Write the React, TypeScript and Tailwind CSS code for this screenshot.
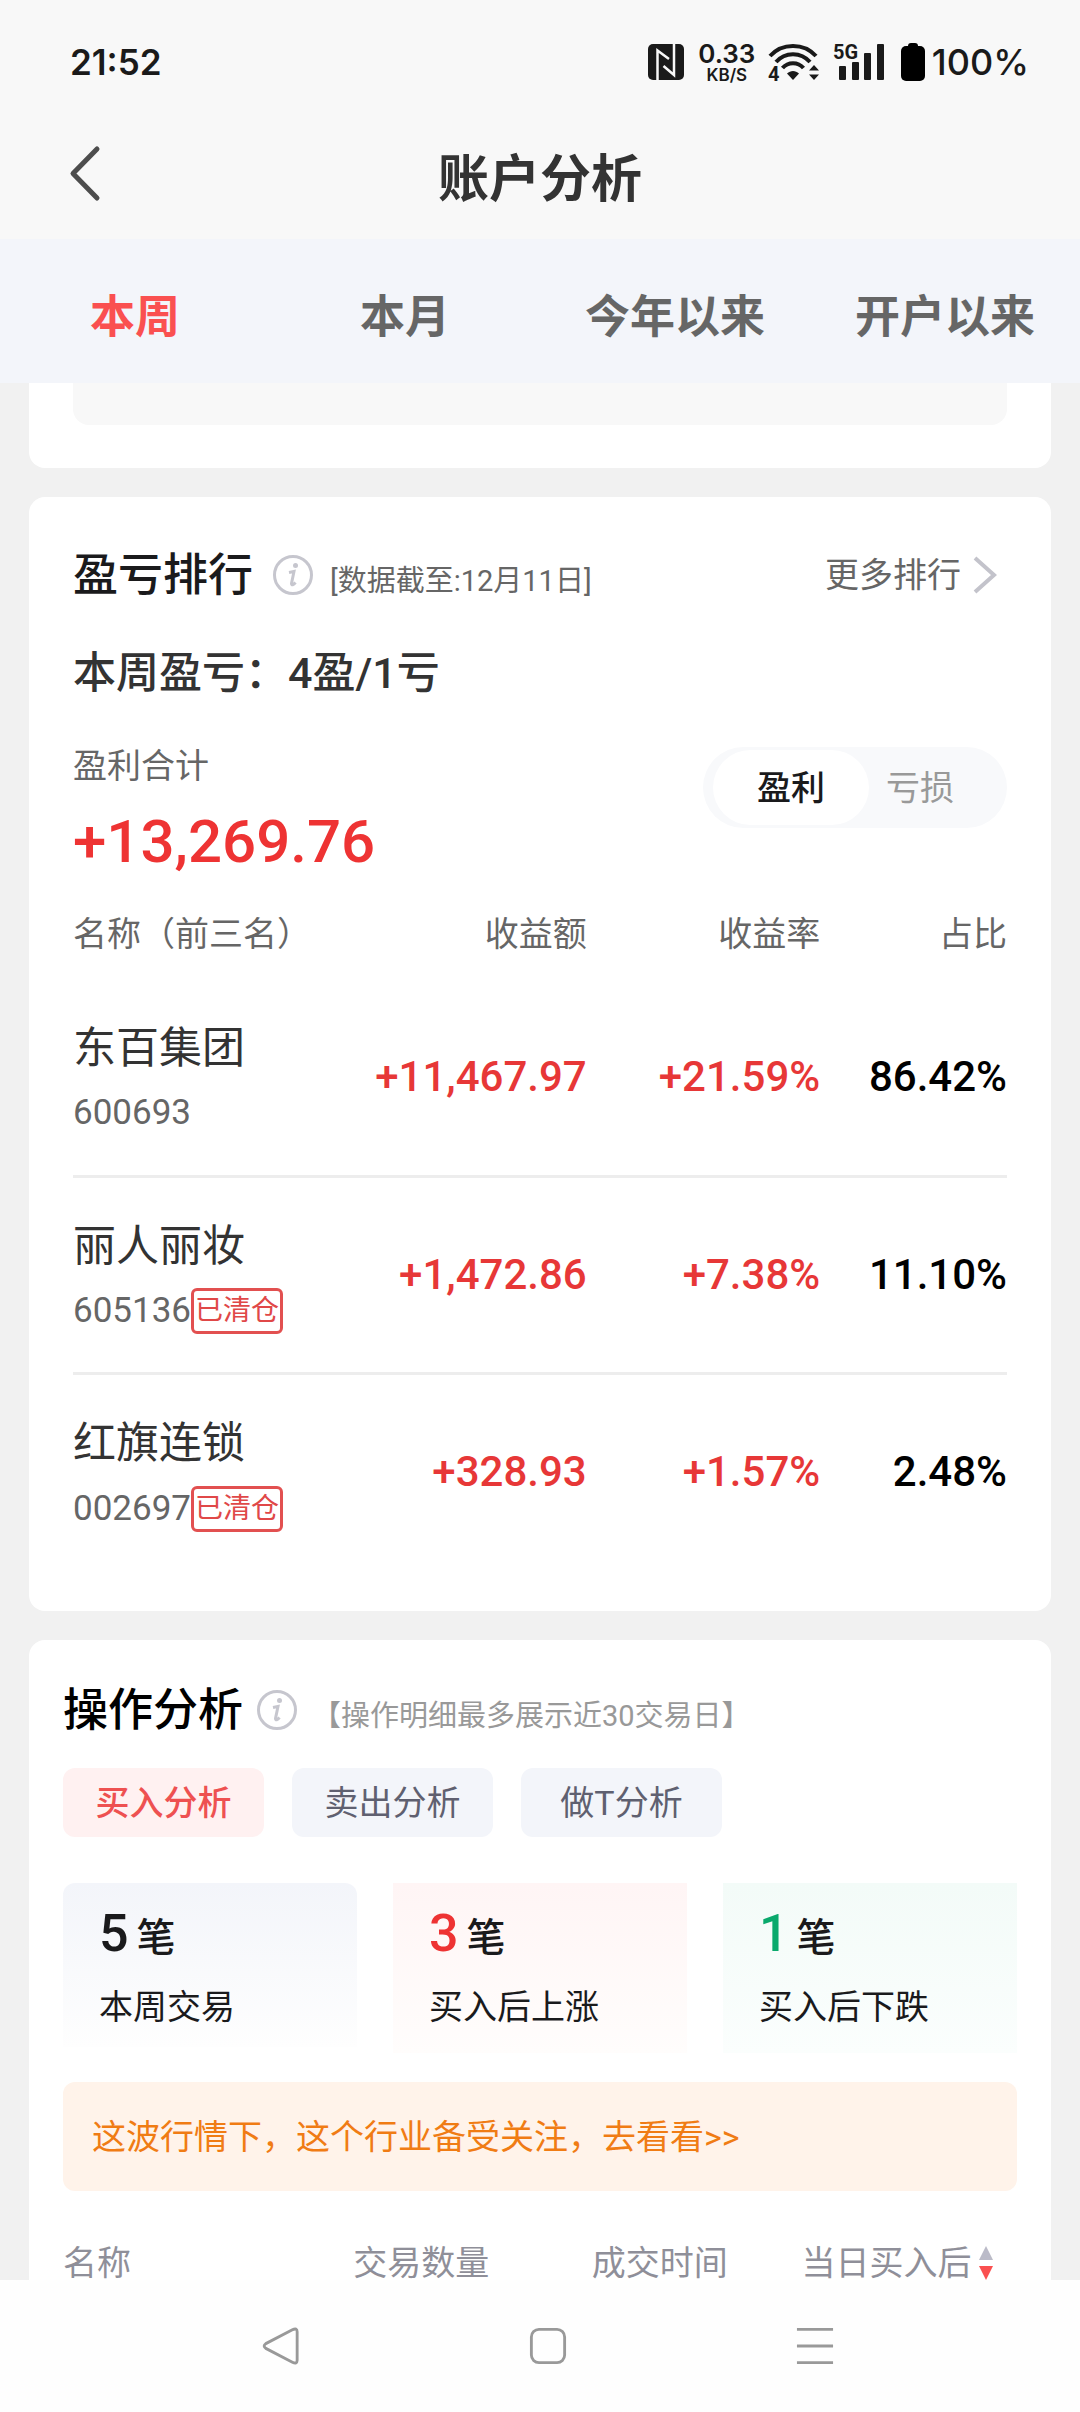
import { useState } from 'react'

const tabs = ['本周', '本月', '今年以来', '开户以来']

const stocks = [
    { name: '东百集团', code: '600693', cleared: false, profit: '+11,467.97', rate: '+21.59%', share: '86.42%' },
    { name: '丽人丽妆', code: '605136', cleared: true, profit: '+1,472.86', rate: '+7.38%', share: '11.10%' },
    { name: '红旗连锁', code: '002697', cleared: true, profit: '+328.93', rate: '+1.57%', share: '2.48%' },
]

const analyses = ['买入分析', '卖出分析', '做T分析']

const stats = [
    { count: 5, label: '本周交易', color: 'text-[#1a1a1c]', bg: 'h-[164px] rounded-t-xl from-[#f3f5fa] to-[#fefefe]' },
    { count: 3, label: '买入后上涨', color: 'text-[#ee3333]', bg: 'h-[170px] from-[#fff5f5] to-[#fffdfc]' },
    { count: 1, label: '买入后下跌', color: 'text-[#0aa96c]', bg: 'h-[170px] from-[#f3fbf8] to-[#fbfefd]' },
]

const StatusBar = () => (
    <div className="h-[112px] pt-[12px] pl-[70px] pr-[51px] flex items-center justify-between font-['Inter','Noto_Sans_CJK_SC',sans-serif] text-[#1a1a1a]">
        <span className="text-[35px] font-semibold">21:52</span>
        <div className="flex items-center">
            {/* nfc */}
            <svg width="36" height="36" viewBox="0 0 36 36" fill="none">
                <rect width="36" height="36" rx="5" fill="#1a1a1a" />
                <path d="M9.500 36V6.500L21 15M26 0V31L15.500 22" stroke="#f8f8f8" strokeWidth="2.500" />
            </svg>
            <div className="w-[58px] ml-[14px] flex flex-col items-center font-semibold">
                <span className="text-[26px] leading-[26px]">0.33</span>
                <span className="text-[17px] leading-[17px]">KB/S</span>
            </div>
            {/* wifi */}
            <svg className="ml-[11px] overflow-visible" width="54" height="40" viewBox="0 0 54 40" fill="none">
                <path d="M3 14C15 .5 37 .5 49 14M9 20C18 9.500 34 9.500 43 20M15.500 26C21 19.500 31 19.500 36.500 26" stroke="#1a1a1a" strokeWidth="4" />
                <path d="M26 38L20 31.500C23.500 28 28.500 28 32 31.500Z" fill="#1a1a1a" />
                <path d="M47 23l5 5.500H42zM47 38l5-5.500H42z" fill="#1a1a1a" />
                <text x="1" y="39" fontSize="20" fontWeight="700" fill="#1a1a1a" fontFamily="Roboto">4</text>
            </svg>
            {/* signal */}
            <svg className="ml-[12px] overflow-visible" width="54" height="40" viewBox="0 0 54 40">
                <text x="0" y="17" fontSize="20" fontWeight="700" fill="#1a1a1a" fontFamily="Roboto">5G</text>
                <g fill="#1a1a1a">
                    <rect x="6" y="24" width="7" height="14" rx="1" />
                    <rect x="19" y="20" width="7" height="18" rx="1" />
                    <rect x="31" y="11" width="7" height="27" rx="1" />
                    <rect x="44" y="2" width="7" height="36" rx="1" />
                </g>
            </svg>
            {/* battery */}
            <svg className="ml-[14px]" width="24" height="38" viewBox="0 0 24 38">
                <rect x="7" width="10" height="8" rx="3" />
                <rect y="3" width="24" height="35" rx="5" />
            </svg>
            <span className="ml-[7px] text-[36px] font-medium">100%</span>
        </div>
    </div>
)

const InfoIcon = () => (
    <svg width="42" height="42" viewBox="0 0 42 42" fill="none" stroke="#c6c6ce">
        <circle cx="21" cy="21" r="18.500" strokeWidth="3" />
        <path d="M17 18.500L22 17.500L19.500 29.500C19.500 31.500 21.500 31 23.500 28.500" strokeWidth="3" />
        <circle cx="23.500" cy="11.500" r="2.500" fill="#c6c6ce" stroke="none" />
    </svg>
)

const App = () => {
    const [activeTab, setActiveTab] = useState('本周')
    const [side, setSide] = useState('盈利')
    const [analysis, setAnalysis] = useState('买入分析')

    return (
        <div className="h-screen min-h-[2412px] flex flex-col bg-[#f1f1f1] font-['Roboto','Noto_Sans_CJK_SC',sans-serif] text-[34px] leading-[48px] text-[#666]">
            <header className="shrink-0 bg-[#f8f8f8]">
                <StatusBar />
                <div className="h-[127px] px-[64px] grid grid-cols-[1fr_auto_1fr] items-center">
                    <button aria-label="返回" className="pb-1">
                        <svg width="42" height="60" viewBox="0 0 42 60" fill="none" stroke="#4d4d4d" strokeWidth="5" strokeLinecap="round" strokeLinejoin="round">
                            <path d="M33 5L9 29.500L33 54" />
                        </svg>
                    </button>
                    <h1 className="pt-2 text-[51px] font-bold text-[#333]">账户分析</h1>
                </div>
            </header>

            <nav className="h-[144px] pt-[14px] shrink-0 grid grid-cols-4 bg-[#f3f5fa]">
                {tabs.map((tab) => (
                    <button key={tab} onClick={() => setActiveTab(tab)} className={`text-[45px] font-bold ${activeTab === tab ? 'text-[#fa5050]' : 'text-[#666]'}`}>{tab}</button>
                ))}
            </nav>

            <main className="flex-1 min-h-0 overflow-hidden px-[29px]">
                {/* tail of the previous card */}
                <div className="h-[85px] px-[44px] pb-[43px] bg-white rounded-b-2xl">
                    <div className="h-full bg-[#f8f8f8] rounded-b-2xl" />
                </div>

                {/* ranking */}
                <section className="mt-[29px] px-[44px] pt-[48px] pb-[41px] bg-white rounded-2xl">
                    <div className="h-[60px] flex items-center">
                        <h2 className="pt-[2px] text-[45px] font-medium text-[#1a1a1c]">盈亏排行</h2>
                        <button aria-label="说明" className="ml-[19px]"><InfoIcon /></button>
                        <span className="ml-[16px] pt-[11px] text-[29px]">[数据截至:12月11日]</span>
                        <a href="#" className="ml-auto pr-[10px] flex items-center gap-3">
                            更多排行
                            <svg width="24" height="38" viewBox="0 0 24 38" fill="none" stroke="#c3c3cb" strokeWidth="4">
                                <path d="M2 2L21 19L2 36" />
                            </svg>
                        </a>
                    </div>
                    <p className="mt-[38px] text-[43px] leading-[60px] font-medium text-[#333]">本周盈亏：4盈/1亏</p>
                    <div className="mt-[39px] flex justify-between">
                        <div>
                            <p>盈利合计</p>
                            <p className="mt-[18px] text-[60px] leading-[68px] font-medium text-[#ee3333]">+13,269.76</p>
                        </div>
                        <div className="mt-[5px] w-[304px] h-[81px] pl-[10px] pr-[12px] py-[3px] flex rounded-full bg-[#f8f9fb]">
                            {['盈利', '亏损'].map((item) => (
                                <button key={item} onClick={() => setSide(item)} className={`rounded-full ${side === item ? 'w-[156px] bg-white font-medium text-[#1a1a1c]' : 'w-[102px] text-[#999]'}`}>{item}</button>
                            ))}
                        </div>
                    </div>

                    <table className="mt-[34px] w-full table-fixed text-right">
                        <colgroup>
                            <col className="w-[27%]" />
                            <col className="w-[28%]" />
                            <col className="w-[25%]" />
                            <col className="w-[20%]" />
                        </colgroup>
                        <thead>
                            <tr className="h-[69px] align-top">
                                <th className="text-left font-normal whitespace-nowrap">名称（前三名）</th>
                                <th className="font-normal">收益额</th>
                                <th className="font-normal">收益率</th>
                                <th className="font-normal">占比</th>
                            </tr>
                        </thead>
                        <tbody>
                            {stocks.map((stock) => (
                                <tr key={stock.code} className="h-[197px] text-[42px] font-medium text-[#e73737] border-b-3 border-[#ededed] last:border-0">
                                    <td className="pt-2 text-left font-normal">
                                        <p className="text-[43px] leading-[65px] text-[#333]">{stock.name}</p>
                                        <div className="h-[65px] flex items-center text-[35px] text-[#666]">
                                            {stock.code}
                                            {stock.cleared && <span className="h-[46px] px-[1px] flex items-center border-3 border-[#e25050] rounded-md text-[28px] whitespace-nowrap text-[#e04848]">已清仓</span>}
                                        </div>
                                    </td>
                                    <td>{stock.profit}</td>
                                    <td>{stock.rate}</td>
                                    <td className="text-black">{stock.share}</td>
                                </tr>
                            ))}
                        </tbody>
                    </table>
                </section>

                {/* operations */}
                <section className="mt-[29px] px-[34px] pt-[40px] pb-10 bg-white rounded-t-2xl">
                    <div className="h-[60px] flex items-center">
                        <h2 className="pt-[2px] text-[45px] font-medium text-black">操作分析</h2>
                        <button aria-label="说明" className="ml-[13px]"><InfoIcon /></button>
                        <span className="ml-[14px] pt-[12px] text-[29px] text-[#999]">【操作明细最多展示近30交易日】</span>
                    </div>
                    <div className="mt-[28px] flex gap-7">
                        {analyses.map((item) => (
                            <button key={item} onClick={() => setAnalysis(item)} className={`w-[201px] h-[69px] rounded-xl ${analysis === item ? 'bg-[#fff1f1] text-[#ee5151] font-medium' : 'bg-[#f3f5fa] text-[#5f6070]'}`}>{item}</button>
                        ))}
                    </div>
                    <div className="mt-[46px] grid grid-cols-3 gap-9 items-start">
                        {stats.map((stat) => (
                            <div key={stat.label} className={`px-[36px] pt-[21px] bg-linear-to-b text-[#1a1a1c] ${stat.bg}`}>
                                <p className="flex items-baseline gap-2 text-[39px] leading-[60px] font-medium">
                                    <span className={`text-[52px] ${stat.color}`}>{stat.count}</span>笔
                                </p>
                                <p className="mt-[15px]">{stat.label}</p>
                            </div>
                        ))}
                    </div>
                    <a href="#" className="mt-[29px] h-[109px] px-[29px] flex items-center rounded-xl bg-[#fff3ea] text-[#f07c14]">这波行情下，这个行业备受关注，去看看&gt;&gt;</a>
                    <table className="mt-[48px] w-full table-fixed text-left text-[#8f8f99]">
                        <thead>
                            <tr>
                                <th className="w-[30%] font-normal">名称</th>
                                <th className="w-[25%] pl-1 font-normal">交易数量</th>
                                <th className="pl-1 font-normal">成交时间</th>
                                <th className="w-[23%] pl-1 font-normal">
                                    <button className="flex items-center gap-[6px] whitespace-nowrap">
                                        当日买入后
                                        <svg width="16" height="34" viewBox="0 0 16 34">
                                            <path d="M8 0L15 14H1Z" fill="#bbbbc8" />
                                            <path d="M8 34L15 20H1Z" fill="#fa5050" />
                                        </svg>
                                    </button>
                                </th>
                            </tr>
                        </thead>
                    </table>
                </section>
            </main>

            {/* system navigation */}
            <footer className="h-[132px] shrink-0 pl-[147px] pr-[132px] grid grid-cols-3 justify-items-center items-center bg-[#fefefe]">
                <button aria-label="后退">
                    <svg width="38" height="38" viewBox="0 0 40 40" fill="none" stroke="#999" strokeWidth="3" strokeLinejoin="round">
                        <path d="M32 3Q37 0.500 37 5V35Q37 39.500 32 37L4 22.500Q0.500 20 4 17.500Z" />
                    </svg>
                </button>
                <button aria-label="主页">
                    <svg width="38" height="38" viewBox="0 0 40 40" fill="none" stroke="#999" strokeWidth="3">
                        <rect x="2.500" y="2.500" width="35" height="35" rx="8" />
                    </svg>
                </button>
                <button aria-label="最近任务">
                    <svg width="38" height="38" viewBox="0 0 40 40" fill="none" stroke="#999" strokeWidth="3">
                        <path d="M1 2.500H39M1 20H39M1 37.500H39" />
                    </svg>
                </button>
            </footer>
        </div>
    )
}

export default App
